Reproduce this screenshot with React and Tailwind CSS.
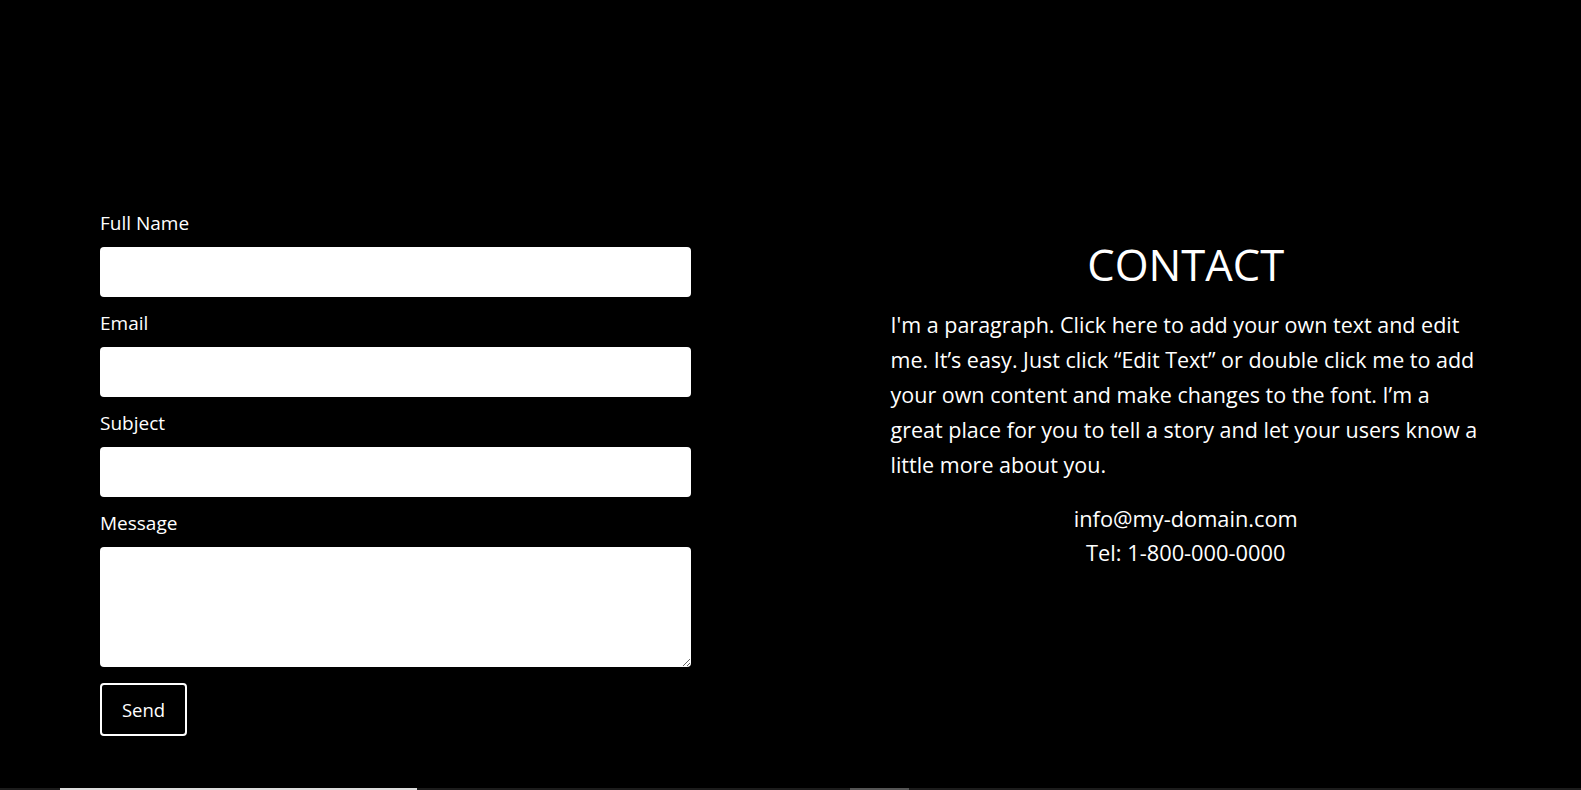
import React from 'react';

const font = { fontFamily: '"Open Sans", "Noto Sans", sans-serif' };

const Field = ({ label, area }) => (
  <div className="flex flex-col">
    <label className="text-[19px] leading-[24px] text-white mb-3">{label}</label>
    {area ? (
      <textarea className="h-[120px] w-full rounded-[4px] bg-white text-black" />
    ) : (
      <input type="text" className="h-[50px] w-full rounded-[4px] bg-white text-black" />
    )}
  </div>
);

export default function App() {
  return (
    <div className="h-[790px] w-full bg-black flex flex-col overflow-hidden" style={font}>
      <div className="grid grid-cols-2 flex-1">
        {/* Form */}
        <div className="px-[100px] pt-[211px]">
          <form className="flex flex-col gap-[14px]" onSubmit={(e) => e.preventDefault()}>
            <Field label="Full Name" />
            <Field label="Email" />
            <Field label="Subject" />
            <Field label="Message" area />
          </form>
          <button className="mt-4 h-[53px] w-[87px] rounded-[4px] border-2 border-white text-white text-[18.5px]">
            Send
          </button>
        </div>

        {/* Contact text */}
        <div className="px-[100px] pt-[237px] text-white">
          <h2 className="text-center text-[43.5px] leading-[55px]">CONTACT</h2>
          <p className="mt-[15px] text-[21.5px] leading-[35px]">
            I'm a paragraph. Click here to add your own text and edit me. It’s easy. Just click “Edit Text” or double click me to add your own content and make changes to the font. I’m a great place for you to tell a story and let your users know a little more about you.
          </p>
          <div className="mt-5 text-center text-[21.8px] leading-[34px]">
            <p>info@my-domain.com</p>
            <p>Tel: 1-800-000-0000</p>
          </div>
        </div>
      </div>

      {/* next section peeking in */}
      <div className="flex h-[2px]">
        <div className="w-[60px] bg-[#1c1c1c]" />
        <div className="w-[357px] bg-[#dcdcdc]" />
        <div className="w-[433px] bg-[#1c1c1c]" />
        <div className="w-[59px] bg-[#555555]" />
        <div className="flex-1 bg-[#1c1c1c]" />
      </div>
    </div>
  );
}
